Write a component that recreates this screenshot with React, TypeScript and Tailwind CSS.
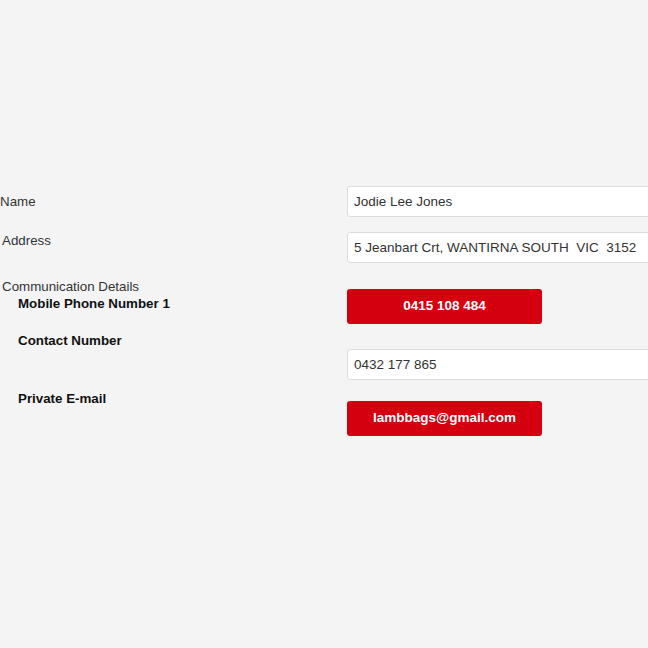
import * as React from 'react';

const font = { fontFamily: '"Liberation Sans", Arial, sans-serif' };

function Field({ value }: { value: string }) {
  return (
    <input
      readOnly
      value={value}
      className="box-border h-[31px] w-[420px] flex-none rounded-[3px] border border-[#dcdcdc] bg-white px-[6px] text-[13.5px] text-[#333] outline-none"
      style={font}
    />
  );
}

function RedButton({ children }: { children: React.ReactNode }) {
  return (
    <button className="h-[35px] w-[195px] rounded-[3px] bg-[#d4000f] text-[13.5px] font-bold text-white">
      {children}
    </button>
  );
}

export default function App() {
  return (
    <div className="min-h-[648px] w-full overflow-hidden bg-[#f4f4f4] pt-[186px] text-[13.33px]" style={font}>
      {/* Name */}
      <div className="flex">
        <div className="flex w-[347px] flex-none items-center text-[#333]">Name</div>
        <Field value="Jodie Lee Jones" />
      </div>

      {/* Address */}
      <div className="mt-[15px] flex">
        <div className="w-[347px] flex-none pl-[2px] pt-[1px] leading-4 text-[#333]">Address</div>
        <Field value="5 Jeanbart Crt, WANTIRNA SOUTH  VIC  3152" />
      </div>

      {/* Communication details */}
      <div className="mt-[15px] flex">
        <div className="w-[347px] flex-none pt-[1px] leading-4">
          <div className="pl-[2px] text-[#333]">Communication Details</div>
          <div className="mt-[1px] pl-[18px] font-bold text-[#111]">Mobile Phone Number 1</div>
        </div>
        <div className="flex-none pt-[11px]">
          <RedButton>0415 108 484</RedButton>
        </div>
      </div>

      <div className="mt-[8px] flex">
        <div className="w-[347px] flex-none pl-[18px] pt-[1px] leading-4 font-bold text-[#111]">Contact Number</div>
        <div className="flex-none pt-[17px]">
          <Field value="0432 177 865" />
        </div>
      </div>

      <div className="mt-[11px] flex">
        <div className="w-[347px] flex-none pl-[18px] leading-4 font-bold text-[#111]">Private E-mail</div>
        <div className="flex-none pt-[10px]">
          <RedButton>lambbags@gmail.com</RedButton>
        </div>
      </div>
    </div>
  );
}
